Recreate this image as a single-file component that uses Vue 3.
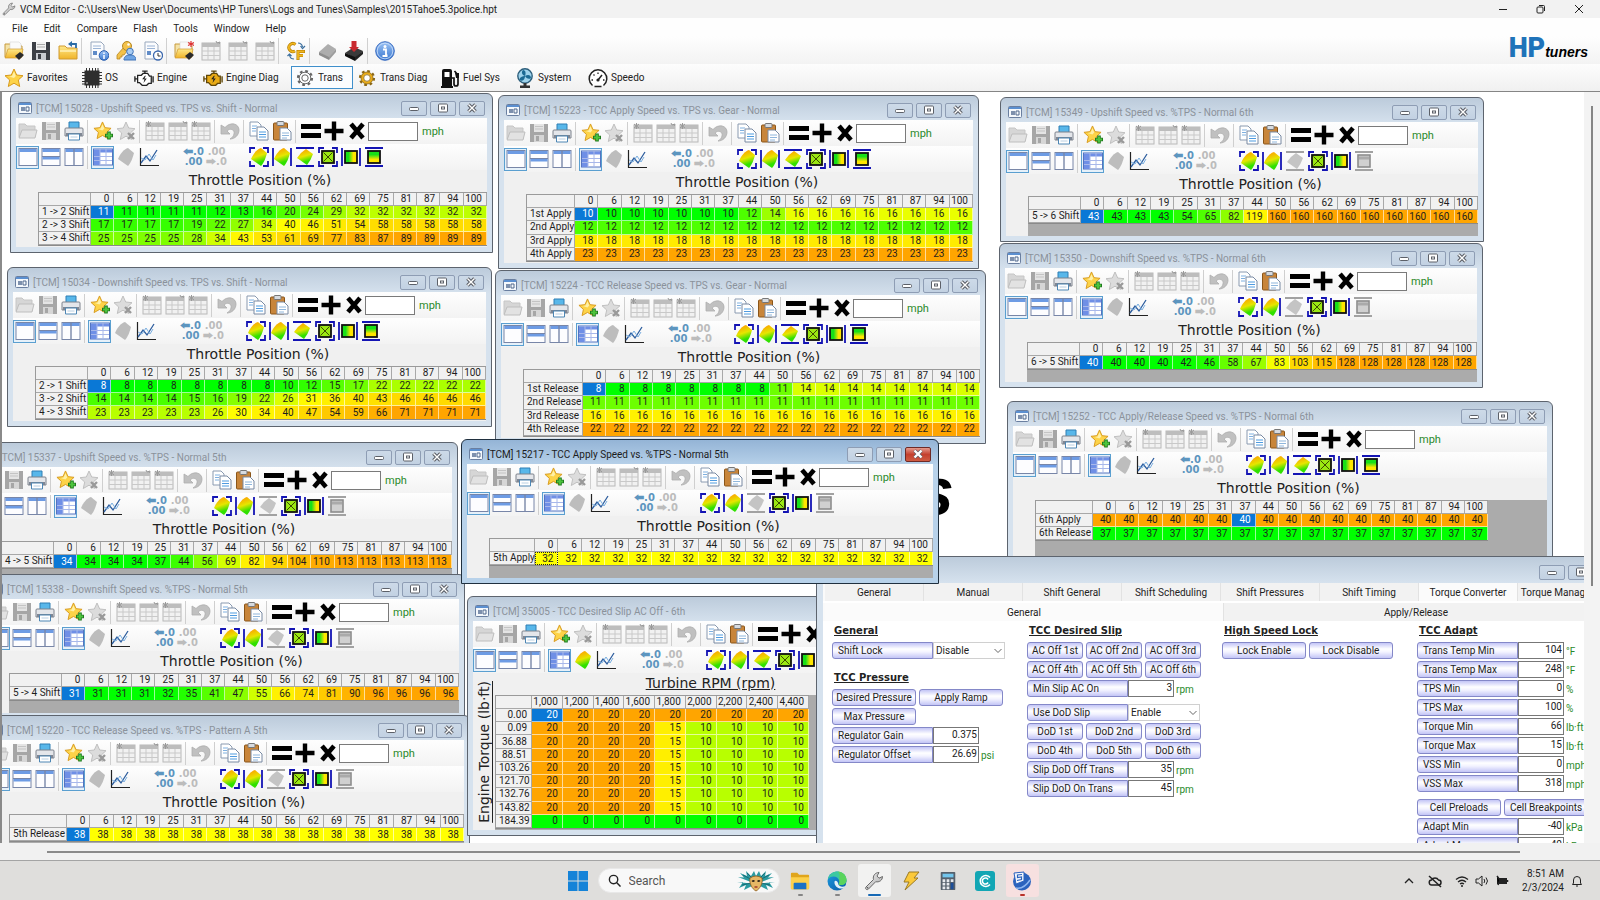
<script setup>
// Menu and toolbars of the main frame
const menus = ['File', 'Edit', 'Compare', 'Flash', 'Tools', 'Window', 'Help']

const mainTools = [
  ['open-chip', 'save', 'folder-back'],
  ['doc-info', 'key-user', 'doc-clock'],
  ['open-compare', 'sheet', 'sheet', 'sheet'],
  ['units'],
  ['chip-read', 'chip-write'],
  ['info'],
]

const sections = [
  { label: 'Favorites', icon: 'star' },
  { label: 'OS', icon: 'cpu' },
  { label: 'Engine', icon: 'engine' },
  { label: 'Engine Diag', icon: 'engine-diag' },
  { label: 'Trans', icon: 'gear', active: true },
  { label: 'Trans Diag', icon: 'gear-diag' },
  { label: 'Fuel Sys', icon: 'pump' },
  { label: 'System', icon: 'fan' },
  { label: 'Speedo', icon: 'gauge' },
]

// Toolbars of a table window
const fileTools = [
  ['folder-off', 'save-off', 'printer'],
  ['star-add', 'star-del'],
  ['sheet-off', 'sheet', 'sheet-off'],
  ['undo'],
  ['copy', 'paste'],
]
const mathTools = ['equals', 'plus', 'times']

const full = ['fit-all', 'fit-x', 'fit-y', 'range-all', 'range-x', 'range-y']
const rowOnly = ['fit-all', 'fit-x', 'fit-y-off', 'range-all', 'range-x', 'range-y-off']

const tps = [0, 6, 12, 19, 25, 31, 37, 44, 50, 56, 62, 69, 75, 81, 87, 94, 100]
const rep = (v, n = 17) => Array(n).fill(v)

const slipRow = [20, 20, 20, 20, 15, 10, 10, 10, 10]

// left/top/width/height of each child window inside the MDI area
const windows = [
  {
    title: '[TCM] 15028 - Upshift Speed vs. TPS vs. Shift - Normal',
    x: 8, y: 1, w: 483, h: 160, head: 52, th: 54, tools: full,
    rows: [
      ['1 -> 2 Shift', [11, 11, 11, 11, 11, 12, 13, 16, 20, 24, 29, 32, 32, 32, 32, 32, 32]],
      ['2 -> 3 Shift', [17, 17, 17, 17, 19, 22, 27, 34, 40, 46, 51, 54, 58, 58, 58, 58, 58]],
      ['3 -> 4 Shift', [25, 25, 25, 25, 28, 34, 43, 53, 61, 69, 77, 83, 87, 89, 89, 89, 89]],
    ],
  },
  {
    title: '[TCM] 15223 - TCC Apply Speed vs. TPS vs. Gear - Normal',
    x: 496, y: 3, w: 481, h: 174, head: 48, th: 68, tools: full,
    rows: [
      ['1st Apply', [...rep(10, 7), 12, 14, ...rep(16, 8)]],
      ['2nd Apply', rep(12)],
      ['3rd Apply', rep(18)],
      ['4th Apply', rep(23)],
    ],
  },
  {
    title: '[TCM] 15349 - Upshift Speed vs. %TPS - Normal 6th',
    x: 998, y: 5, w: 484, h: 145, head: 52, th: 27, tools: rowOnly, fill: true,
    rows: [['5 -> 6 Shift', [...rep(43, 4), 54, 65, 82, 119, ...rep(160, 9)]]],
  },
  {
    title: '[TCM] 15350 - Downshift Speed vs. %TPS - Normal 6th',
    x: 997, y: 151, w: 484, h: 145, head: 52, th: 27, tools: rowOnly, fill: true,
    rows: [['6 -> 5 Shift', [...rep(40, 4), 42, 46, 58, 67, 83, 103, 115, ...rep(128, 6)]]],
  },
  {
    title: '[TCM] 15034 - Downshift Speed vs. TPS vs. Shift - Normal',
    x: 5, y: 175, w: 485, h: 160, head: 52, th: 54, tools: full,
    rows: [
      ['2 -> 1 Shift', [...rep(8, 8), 10, 12, 15, 17, ...rep(22, 5)]],
      ['3 -> 2 Shift', [14, 14, 14, 14, 15, 16, 19, 22, 26, 31, 36, 40, 43, 46, 46, 46, 46]],
      ['4 -> 3 Shift', [23, 23, 23, 23, 23, 26, 30, 34, 40, 47, 54, 59, 66, 71, 71, 71, 71]],
    ],
  },
  {
    title: '[TCM] 15224 - TCC Release Speed vs. TPS vs. Gear - Normal',
    x: 493, y: 178, w: 491, h: 174, head: 59, th: 68, tools: full,
    rows: [
      ['1st Release', [...rep(8, 8), 11, ...rep(14, 8)]],
      ['2nd Release', rep(11)],
      ['3rd Release', rep(16)],
      ['4th Release', rep(22)],
    ],
  },
  {
    title: '[TCM] 15252 - TCC Apply/Release Speed vs. %TPS - Normal 6th',
    x: 1005, y: 309, w: 546, h: 190, head: 57, th: 40, tw: 453, tools: full, fill: true, sel: [0, 6],
    rows: [['6th Apply', rep(40)], ['6th Release', rep(37)]],
  },
  {
    title: '[TCM] 15337 - Upshift Speed vs. %TPS - Normal 5th',
    x: -29, y: 350, w: 485, h: 145, head: 52, th: 27, tools: rowOnly, fill: true,
    rows: [['4 -> 5 Shift', [...rep(34, 4), 37, 44, 56, 69, 82, 94, 104, 110, ...rep(113, 5)]]],
  },
  {
    title: '[TCM] 15338 - Downshift Speed vs. %TPS - Normal 5th',
    x: -21, y: 482, w: 484, h: 145, head: 52, th: 27, tools: rowOnly, fill: true,
    rows: [['5 -> 4 Shift', [...rep(31, 4), 32, 35, 41, 47, 55, 66, 74, 81, 90, ...rep(96, 4)]]],
  },
  {
    title: '[TCM] 15220 - TCC Release Speed vs. %TPS - Pattern A 5th',
    x: -21, y: 623, w: 489, h: 145, head: 57, th: 27, tools: rowOnly, fill: true,
    rows: [['5th Release', rep(38)]],
  },
  {
    title: '[TCM] 35005 - TCC Desired Slip AC Off - 6th',
    x: 465, y: 504, w: 470, h: 240, head: 36, th: 134, tw: 314, tools: full, fill: true,
    axis: 'Turbine RPM (rpm)', yAxis: 'Engine Torque (lb·ft)', surface: true,
    cols: ['1,000', '1,200', '1,400', '1,600', '1,800', '2,000', '2,200', '2,400', '4,400'],
    rows: [
      ['0.00', rep(20, 9)],
      ...['0.09', '36.88', '88.51', '103.26', '121.70', '132.76', '143.82'].map(n => [n, slipRow]),
      ['184.39', rep(0, 9)],
    ],
  },
]

const activeWindow = {
  title: '[TCM] 15217 - TCC Apply Speed vs. %TPS - Normal 5th',
  x: 459, y: 347, w: 478, h: 145, head: 45, th: 27, tools: rowOnly, fill: true, active: true,
  rows: [['5th Apply', rep(32)]],
}
const tableWindows = [...windows, activeWindow]

// green at the minimum, yellow at the average, orange at the maximum
function cellColor(win, v) {
  const all = win.rows.flatMap(r => r[1])
  const min = Math.min(...all)
  const max = Math.max(...all)
  const avg = all.reduce((a, b) => a + b, 0) / all.length
  if (min === max) return 'rgb(255, 255, 0)'
  if (v <= avg) return `rgb(${Math.round(255 * (v - min) / (avg - min))}, 255, 0)`
  return `rgb(255, ${Math.round(255 - 90 * (v - avg) / (max - avg))}, 0)`
}

function isSelected(win, r, c) {
  const [sr, sc] = win.sel || [0, 0]
  return r === sr && c === sc
}

const tabs = ['General', 'Manual', 'Shift General', 'Shift Scheduling', 'Shift Pressures', 'Shift Timing', 'Torque Converter', 'Torque Management']

const num = (label, value, unit) => ({ type: 'num', label, value, unit })
const formColumns = [
  [
    { type: 'heading', text: 'General' },
    { type: 'select', label: 'Shift Lock', value: 'Disable' },
    { type: 'space-l' },
    { type: 'heading', text: 'TCC Pressure' },
    { type: 'half', items: ['Desired Pressure', 'Apply Ramp'] },
    { type: 'half', items: ['Max Pressure'] },
    num('Regulator Gain', '0.375', ''),
    num('Regulator Offset', '26.69', 'psi'),
  ],
  [
    { type: 'heading', text: 'TCC Desired Slip' },
    { type: 'third', items: ['AC Off 1st', 'AC Off 2nd', 'AC Off 3rd'] },
    { type: 'third', items: ['AC Off 4th', 'AC Off 5th', 'AC Off 6th'] },
    num('Min Slip AC On', '3', 'rpm'),
    { type: 'space' },
    { type: 'select', label: 'Use DoD Slip', value: 'Enable' },
    { type: 'third', items: ['DoD 1st', 'DoD 2nd', 'DoD 3rd'] },
    { type: 'third', items: ['DoD 4th', 'DoD 5th', 'DoD 6th'] },
    num('Slip DoD Off Trans', '35', 'rpm'),
    num('Slip DoD On Trans', '45', 'rpm'),
  ],
  [
    { type: 'heading', text: 'High Speed Lock' },
    { type: 'half', items: ['Lock Enable', 'Lock Disable'] },
  ],
  [
    { type: 'heading', text: 'TCC Adapt' },
    num('Trans Temp Min', '104', '°F'),
    num('Trans Temp Max', '248', '°F'),
    num('TPS Min', '0', '%'),
    num('TPS Max', '100', '%'),
    num('Torque Min', '66', 'lb·ft'),
    num('Torque Max', '15', 'lb·ft'),
    num('VSS Min', '0', 'mph'),
    num('VSS Max', '318', 'mph'),
    { type: 'space' },
    { type: 'half', items: ['Cell Preloads', 'Cell Breakpoints'] },
    num('Adapt Min', '-40', 'kPa'),
    num('Adapt Max', '40', 'kPa'),
  ],
]

const pinned = [
  { icon: 'explorer', mark: 'dot' },
  { icon: 'edge', mark: 'dot' },
  { icon: 'wrench', mark: 'bar', state: 'current' },
  { icon: 'bolt' },
  { icon: 'calc' },
  { icon: 'camtasia' },
  { icon: 'snagit', mark: 'red', state: 'alert' },
]
</script>

<template>
  <svg class="sprite" aria-hidden="true">
    <defs>
      <linearGradient id="g-surf" x1="0.3" y1="0" x2="0.6" y2="1">
        <stop offset="0" stop-color="#ff9a00"/><stop offset="0.45" stop-color="#e6e600"/><stop offset="0.8" stop-color="#30e000"/>
      </linearGradient>
      <linearGradient id="g-gold" x1="0" y1="0" x2="0" y2="1">
        <stop offset="0" stop-color="#ffe98a"/><stop offset="1" stop-color="#f0b429"/>
      </linearGradient>
      <linearGradient id="g-h" x1="0" x2="1"><stop offset="0.3" stop-color="#18e018"/><stop offset="0.7" stop-color="#ffe600"/></linearGradient>
      <linearGradient id="g-v" x1="0" y1="0" x2="0" y2="1"><stop offset="0.3" stop-color="#18e018"/><stop offset="0.7" stop-color="#ffe600"/></linearGradient>
      <linearGradient id="g-blue" x1="0" y1="0" x2="0" y2="1"><stop offset="0" stop-color="#9cc3f5"/><stop offset="1" stop-color="#3a78d0"/></linearGradient>
      <linearGradient id="g-edge" x1="0" y1="0" x2="1" y2="1"><stop offset="0" stop-color="#1b9de2"/><stop offset="1" stop-color="#0c59a4"/></linearGradient>
      <linearGradient id="g-steel" x1="0" y1="0" x2="1" y2="1"><stop offset="0" stop-color="#f4f4f4"/><stop offset="1" stop-color="#a8a8a8"/></linearGradient>
    </defs>

    <symbol id="win" viewBox="0 0 14 12">
      <rect x="0.5" y="0.5" width="13" height="11" rx="1" fill="#f4f8fc" stroke="#6a7fa0"/>
      <rect x="1" y="1" width="12" height="2" fill="#5b8fd0"/>
      <path d="M3 5h4v4H3z" fill="#7d90ad"/><path d="M8 5h3v4H8z" fill="none" stroke="#50688c"/>
    </symbol>
    <symbol id="wrench" viewBox="0 0 20 20">
      <path d="M2 16 L9.500 8.500 C8.500 5 11 1.500 15 1.500 L13 5 L15 7.200 L18.500 5.500 C18.500 9.500 15 11.500 11.700 10.700 L4.500 18 C3 19.500 0.500 18 2 16Z" fill="url(#g-steel)" stroke="#6a6a6a" stroke-width="1"/>
      <circle cx="3.500" cy="16.700" r="0.800" fill="#555"/>
    </symbol>

    <symbol id="open-chip" viewBox="0 0 20 20">
      <path d="M1 5V3h6l2 2h9v11H1z" fill="#f4e3a8" stroke="#c79a3c"/><path d="M6 1h9l2 2v6H6z" fill="#fafafa" stroke="#ccc" stroke-width="0.500"/>
      <path d="M1 17l3-9h15l-2 9z" fill="url(#g-gold)" stroke="#d09a30" stroke-width="0.700"/>
      <path d="M11 15l5-4 4 3-5 5z" fill="#2b2b2b"/>
    </symbol>
    <symbol id="open-compare" viewBox="0 0 20 20">
      <use href="#open-chip"/>
      <path d="M17 0v6M14 1.500l6 3M20 1.500l-6 3" stroke="#d33" stroke-width="1.200"/>
    </symbol>
    <symbol id="folder-back" viewBox="0 0 20 20">
      <path d="M1 5h6l2 2h10v11H1z" fill="url(#g-gold)" stroke="#d09a30"/>
      <path d="M2 10h16" stroke="#fff2b8" stroke-width="1.500"/>
      <path d="M18 7V3h-6" fill="none" stroke="#2b6ca8" stroke-width="1.800"/><path d="M14 0l-4 3 4 3z" fill="#2b6ca8"/>
    </symbol>
    <symbol id="folder-off" viewBox="0 0 20 20">
      <path d="M1 5V3h6l2 2h8v11H1z" fill="#d6d6d6" stroke="#c6c6c6"/><path d="M1 17l3-8h15l-2 8z" fill="#e2e2e2" stroke="#bebebe"/>
    </symbol>
    <symbol id="save" viewBox="0 0 20 20">
      <path d="M1 1h18v18H1z" fill="#3c3f46"/><path d="M5 1h10v8H5z" fill="#f2f2f2"/><path d="M6 3.500h8M6 6h8" stroke="#aaa"/><path d="M5 12h10v7H5z" fill="#c9ccd2"/><path d="M7 13h3v5H7z" fill="#3c3f46"/>
    </symbol>
    <symbol id="save-off" viewBox="0 0 20 20">
      <path d="M1 1h18v18H1z" fill="#a6a6a6"/><path d="M5 1h10v8H5z" fill="#e4e4e4"/><path d="M6 3.500h8M6 6h8" stroke="#c4c4c4"/><path d="M5 12h10v7H5z" fill="#d6d6d6"/><path d="M7 13h3v5H7z" fill="#a6a6a6"/>
    </symbol>
    <symbol id="doc-info" viewBox="0 0 20 20">
      <path d="M2 1h10l3 3v14H2z" fill="#fbfcfe" stroke="#99a8bd"/><path d="M4 5h8M4 7.500h8" stroke="#9bb4d6"/><path d="M4 10h4v4H4z" fill="#5f8bc8"/>
      <circle cx="15" cy="14.500" r="4.800" fill="url(#g-blue)" stroke="#2c5fae"/><path d="M15 11.500v1.500M15 14v4" stroke="#fff" stroke-width="1.500"/>
    </symbol>
    <symbol id="doc-clock" viewBox="0 0 20 20">
      <path d="M2 1h10l3 3v14H2z" fill="#fbfcfe" stroke="#99a8bd"/><path d="M4 5h8M4 7.500h8" stroke="#9bb4d6"/><path d="M4 10h4v4H4z" fill="#5f8bc8"/>
      <circle cx="15" cy="14.500" r="4.500" fill="#fff" stroke="#3b68ae" stroke-width="1.300"/><path d="M15 12v3h2.500" fill="none" stroke="#333"/>
    </symbol>
    <symbol id="key-user" viewBox="0 0 20 20">
      <path d="M8 6l-7 8v4h3v-2h2v-2h2l3-4z" fill="#f3c24a" stroke="#b58622" stroke-width="0.800"/><circle cx="11" cy="5" r="4.500" fill="#f3c24a" stroke="#b58622"/><circle cx="12.500" cy="3.500" r="1.300" fill="#fff"/>
      <circle cx="14" cy="10.500" r="3.300" fill="#a9cdf3" stroke="#3f73b8"/><path d="M8 19c0-4 3-5 6-5s6 1 6 5z" fill="#6fa5e4" stroke="#3f73b8"/>
    </symbol>
    <symbol id="sheet" viewBox="0 0 20 20">
      <rect x="1" y="2" width="18" height="17" fill="#f1f1f1" stroke="#b8b8b8"/><rect x="1" y="2" width="18" height="4" fill="#bdbdbd"/>
      <path d="M1 10h18M1 14.500h18M7 6v13M13 6v13" stroke="#c9c9c9"/>
      <path d="M15 0l1 2 3-1-1 2" fill="none" stroke="#999"/>
    </symbol>
    <symbol id="sheet-off" viewBox="0 0 20 20">
      <rect x="1" y="2" width="18" height="17" fill="#f1f1f1" stroke="#b8b8b8"/><rect x="1" y="2" width="18" height="4" fill="#bdbdbd"/>
      <path d="M1 10h18M1 14.500h18M7 6v13M13 6v13" stroke="#c9c9c9"/>
      <path d="M3.500 0v6M1 1l5 4M6 1L1 5" stroke="#999"/>
    </symbol>
    <symbol id="units" viewBox="0 0 20 20">
      <path d="M9.500 3.500A4 4 0 1 0 9 10" fill="none" stroke="#b07800" stroke-width="3"/><path d="M9.500 3.500A4 4 0 1 0 9 10" fill="none" stroke="#f0b61e" stroke-width="1.800"/>
      <path d="M12 19v-8.500h7M12 14.500h5" fill="none" stroke="#b07800" stroke-width="3"/><path d="M12 18.500v-8h6.500M12 14.500h5" fill="none" stroke="#f0b61e" stroke-width="1.800"/>
      <path d="M12 2c3 0 4 1 4.500 4M14.500 5l2 2.500L19 5M8 18c-3 0-4-1-4.500-4M1.500 15l2-2 2 2" fill="none" stroke="#3c6f9e" stroke-width="1.200"/>
    </symbol>
    <symbol id="chip-read" viewBox="0 0 20 20">
      <path d="M2 11l9-8 8 5-7 9z" fill="#adadad"/><path d="M2 11l10 5v3L2 14z" fill="#8d8d8d"/><path d="M12 16l7-8v3l-7 8z" fill="#9c9c9c"/>
    </symbol>
    <symbol id="chip-write" viewBox="0 0 20 20">
      <path d="M1 12l9-6 9 4-8 7z" fill="#3a3a3a"/><path d="M1 12l10 4v4L1 15z" fill="#111"/><path d="M11 16l8-6v3l-8 7z" fill="#222"/>
      <path d="M7.500 0h5v6H15l-5 5-5-5h2.500z" fill="#c92a2f"/>
    </symbol>
    <symbol id="info" viewBox="0 0 20 20">
      <circle cx="10" cy="10" r="9.300" fill="url(#g-blue)" stroke="#3a6cc0"/><circle cx="10" cy="10" r="7.800" fill="none" stroke="#cfe2fb" stroke-width="0.800"/>
      <circle cx="10" cy="5.500" r="1.500" fill="#fff"/><path d="M8 8.500h3v6h1.500M7.500 15h5" fill="none" stroke="#fff" stroke-width="1.800"/>
    </symbol>

    <symbol id="star" viewBox="0 0 20 20">
      <path d="M10 1l2.700 6 6.300.7-4.700 4.300 1.400 6.500L10 15.200l-5.700 3.300L5.700 12 1 7.700 7.300 7z" fill="#fdd348" stroke="#d79a1e"/>
      <path d="M10 3.500l1.800 4.400-1.800 2-5-1.400 3-.5z" fill="#fff0a8"/>
    </symbol>
    <symbol id="star-add" viewBox="0 0 20 20">
      <use href="#star" width="19" height="19"/><path d="M12 14.500h8M16 10.500v8" stroke="#1f7a1f" stroke-width="3.600"/><path d="M13 14.500h6M16 11.500v6" stroke="#4cc33c" stroke-width="2"/>
    </symbol>
    <symbol id="star-del" viewBox="0 0 20 20">
      <path d="M10 1l2.700 6 6.300.7-4.700 4.300 1.400 6.500L10 15.200l-5.700 3.300L5.700 12 1 7.700 7.300 7z" fill="#dcdcdc" stroke="#c0c0c0"/><path d="M12 12l6 6M18 12l-6 6" stroke="#999" stroke-width="2.400"/>
    </symbol>
    <symbol id="cpu" viewBox="0 0 20 20">
      <path d="M4.500 0v20M7.500 0v20M10.500 0v20M13.500 0v20M16 0v20M0 4.500h20M0 7.500h20M0 10.500h20M0 13.500h20M0 16h20" stroke="#333"/>
      <rect x="2.500" y="2.500" width="15" height="15" fill="#2e2e2e"/><circle cx="5" cy="15" r="1" fill="#999"/>
    </symbol>
    <symbol id="engine" viewBox="0 0 22 20">
      <path d="M5 7h3l2-2h5l2 3h2v8h-3l-2 2H9l-3-3H4V7z" fill="#fff" stroke="#222" stroke-width="1.400"/>
      <path d="M9 2.500h6M12 2.500V5M1 8v6M1 11h3M21 8v7" stroke="#222" stroke-width="1.500"/><path d="M12 7.500l-3 4h2.500l-1 4 3.500-5h-2.500l1.500-3z" fill="#222"/>
    </symbol>
    <symbol id="engine-diag" viewBox="0 0 22 20">
      <path d="M5 7h3l2-2h5l2 3h2v8h-3l-2 2H9l-3-3H4V7z" fill="#e9ab16" stroke="#5f4608" stroke-width="1.400"/>
      <path d="M9 2.500h6M12 2.500V5M1 8v6M1 11h3M21 8v7" stroke="#5f4608" stroke-width="1.500"/><path d="M12 7.500l-3 4h2.500l-1 4 3.500-5h-2.500l1.500-3z" fill="#222"/>
    </symbol>
    <symbol id="gear" viewBox="0 0 20 20">
      <circle cx="10" cy="10" r="7" fill="none" stroke="#666" stroke-width="2.200" stroke-dasharray="2.750 2.750"/>
      <circle cx="10" cy="10" r="5.800" fill="#fff" stroke="#666"/><circle cx="10" cy="10" r="3.200" fill="#fff" stroke="#666"/>
    </symbol>
    <symbol id="gear-diag" viewBox="0 0 20 20">
      <circle cx="10" cy="10" r="7" fill="none" stroke="#8a6614" stroke-width="2.200" stroke-dasharray="2.750 2.750"/>
      <circle cx="10" cy="10" r="4.700" fill="#fff" stroke="#e9ab16" stroke-width="2.600"/><circle cx="10" cy="10" r="6" fill="none" stroke="#8a6614" stroke-width="0.800"/><circle cx="10" cy="10" r="3.300" fill="none" stroke="#8a6614" stroke-width="0.800"/>
    </symbol>
    <symbol id="pump" viewBox="0 0 20 20">
      <path d="M2 18V3q0-2 2-2h6q2 0 2 2v15h1v2H1v-2z" fill="#111"/><path d="M4.500 4h5v5h-5z" fill="#fff"/>
      <path d="M12 10h2v6q0 2 2 2t2-2V7l-3.500-4" fill="none" stroke="#111" stroke-width="1.700"/><path d="M15 5h4v5h-3z" fill="#111"/>
    </symbol>
    <symbol id="fan" viewBox="0 0 20 20">
      <circle cx="10" cy="8" r="7.200" fill="#9fd3ec" stroke="#2d5f7c" stroke-width="1.400"/>
      <path d="M10 8c-3-1-4-4-2-6 3 0 3 4 2 6zM10 8c3-2 6-1 6 2-2 2-5 0-6-2zM10 8c0 3-2 6-5 4-1-3 3-4 5-4z" fill="#1c6a94"/>
      <path d="M8.500 15h3v2.500h3.500V20H5v-2.500h3.500z" fill="#333"/>
    </symbol>
    <symbol id="gauge" viewBox="0 0 20 20">
      <path d="M4.500 17.500A8.800 8.800 0 1 1 15.500 17.500" fill="#fff" stroke="#222" stroke-width="1.500"/>
      <path d="M10 12l4-5" stroke="#222" stroke-width="1.500"/><circle cx="10" cy="12" r="1.600" fill="#222"/><path d="M3.500 12H5M5.500 6.500l1 1M10 4.500V6M16.500 12H15M6.500 18.500h7" stroke="#222" stroke-width="1.300"/>
    </symbol>

    <symbol id="printer" viewBox="0 0 20 20">
      <path d="M5 1h10v7H5z" fill="#58b7ea" stroke="#2f7fb4"/><path d="M2 7h16q1 0 1 1v7H1V8q0-1 1-1z" fill="#e4e6ea" stroke="#7d828c"/>
      <path d="M2 12h16v3H2z" fill="#7f8794"/><path d="M4.500 13h11v6h-11z" fill="#fff" stroke="#4d86b4"/><path d="M6.500 16h7" stroke="#b8cfe2"/>
    </symbol>
    <symbol id="undo" viewBox="0 0 20 20">
      <path d="M1 4l0 9h9l-3-3c3-3 8-2 7 3-.5 2-2 4-4 5 5 0 9-4 9-9 0-6-8-9-14-2.500z" fill="#c0c0c0" stroke="#adadad" stroke-width="0.800"/>
    </symbol>
    <symbol id="copy" viewBox="0 0 20 20">
      <path d="M1 1h8l3 3v11H1z" fill="#fff" stroke="#8a9ab0"/><path d="M3 5h5M3 7.500h4M3 10h4" stroke="#7fb0e0"/>
      <path d="M8 6h7l4 4v9H8z" fill="#fff" stroke="#7889a2"/><path d="M10 11h7M10 13.500h7M10 16h7" stroke="#4f9be0" stroke-width="1.200"/>
    </symbol>
    <symbol id="paste" viewBox="0 0 20 20">
      <rect x="1.500" y="2" width="14" height="17" rx="1" fill="#c8853a" stroke="#8a5518"/><rect x="5" y="0.500" width="7" height="4" rx="1" fill="#d7dbe0" stroke="#777"/>
      <path d="M8 7h7l4 4v8H8z" fill="#fff" stroke="#7889a2"/><path d="M10 12h7M10 14.500h7M10 17h5" stroke="#8fb6dc"/>
    </symbol>
    <symbol id="equals" viewBox="0 0 20 20"><path d="M0 5.500h20M0 14.500h20" stroke="#000" stroke-width="5"/></symbol>
    <symbol id="plus" viewBox="0 0 20 20"><path d="M0.500 10h19M10 0.500v19" stroke="#000" stroke-width="4.400"/></symbol>
    <symbol id="times" viewBox="0 0 20 20"><path d="M4 3l12 14M16 3L4 17" stroke="#000" stroke-width="4.600"/></symbol>

    <symbol id="pane-one" viewBox="0 0 20 20"><rect x="1" y="1.500" width="18" height="17" fill="#fdfdff" stroke="#7886a8"/><path d="M1.500 2h17v3h-17z" fill="#6d9be4"/></symbol>
    <symbol id="pane-rows" viewBox="0 0 20 20"><rect x="1" y="1.500" width="18" height="17" fill="#fdfdff" stroke="#7886a8"/><path d="M1.500 2h17v3h-17zM1.500 10h17v2.500h-17z" fill="#6d9be4"/><path d="M1 9.500h18" stroke="#7886a8"/></symbol>
    <symbol id="pane-cols" viewBox="0 0 20 20"><rect x="1" y="1.500" width="18" height="17" fill="#fdfdff" stroke="#7886a8"/><path d="M1.500 2h17v3h-17z" fill="#6d9be4"/><path d="M10 2v16" stroke="#7886a8" stroke-width="1.400"/></symbol>
    <symbol id="grid" viewBox="0 0 20 20">
      <rect x="0.500" y="2" width="19" height="16" fill="#fff" stroke="#5474c0"/><path d="M1 2.500h18v3H1zM1 5h6v13H1z" fill="#6f8fe6"/>
      <path d="M1 9.500h18M1 13.500h18M7 2v16M13 2v16" stroke="#a8b8ea"/>
    </symbol>
    <symbol id="surface-off" viewBox="0 0 20 20"><path d="M2 12C4 7 8 2 12 1l6 5c-1 4-3 10-6 13z" fill="#bdbdbd"/></symbol>
    <symbol id="surface" viewBox="0 0 20 20"><path d="M2 12C4 7 8 2 12 1l6 5c-1 4-3 10-6 13z" fill="url(#g-surf)"/></symbol>
    <symbol id="chart" viewBox="0 0 20 20">
      <path d="M1.500 1v17.500H20" fill="none" stroke="#222" stroke-width="1.200"/><path d="M2 16l5-7 4 5 7-11" fill="none" stroke="#2d5d9e" stroke-width="1.300"/><path d="M2 11l4 2 4-6 4 6 3-5" fill="none" stroke="#79aee0"/>
    </symbol>

    <symbol id="fit-all" viewBox="0 0 20 20">
      <path d="M1 6V1h5M14 1h5v5M19 14v5h-5M6 19H1v-5" fill="none" stroke="#1414b4" stroke-width="1.800"/><use href="#surface"/>
    </symbol>
    <symbol id="fit-x" viewBox="0 0 20 20"><path d="M1 1v18M19 1v18" stroke="#1414b4" stroke-width="1.800"/><use href="#surface"/></symbol>
    <symbol id="fit-y" viewBox="0 0 20 20"><path d="M1 1h18M1 19h18" stroke="#1414b4" stroke-width="1.800"/><path d="M2 11q4-6 9-9l7 5q-2 6-6 11z" fill="url(#g-surf)"/></symbol>
    <symbol id="fit-y-off" viewBox="0 0 20 20"><path d="M1 1h18M1 19h18" stroke="#a2a2a2" stroke-width="1.800"/><path d="M2 11q4-6 9-9l7 5q-2 6-6 11z" fill="#c4c4c4"/></symbol>
    <symbol id="range-all" viewBox="0 0 20 20">
      <path d="M1 6V1h5M14 1h5v5M19 14v5h-5M6 19H1v-5" fill="none" stroke="#1414b4" stroke-width="1.800"/>
      <rect x="4" y="4" width="12" height="12" fill="#9be812" stroke="#111" stroke-width="1.800"/><path d="M5.500 5.500l9 9M14.500 5.500l-9 9" stroke="#3d4a00"/>
    </symbol>
    <symbol id="range-x" viewBox="0 0 20 20">
      <path d="M1 1v18M19 1v18" stroke="#1414b4" stroke-width="1.800"/><rect x="4" y="4" width="12" height="12" fill="url(#g-h)" stroke="#111" stroke-width="1.800"/>
    </symbol>
    <symbol id="range-y" viewBox="0 0 20 20">
      <path d="M1 1h18M1 19h18" stroke="#1414b4" stroke-width="2"/><rect x="4" y="4" width="12" height="12" fill="url(#g-v)" stroke="#111" stroke-width="1.800"/>
    </symbol>
    <symbol id="range-y-off" viewBox="0 0 20 20">
      <path d="M1 1h18M1 19h18" stroke="#a2a2a2" stroke-width="1.800"/><rect x="4" y="4" width="12" height="12" fill="#d0d0d0" stroke="#8c8c8c" stroke-width="1.600"/><path d="M5 7h10" stroke="#aaa" stroke-width="3"/>
    </symbol>

    <symbol id="explorer" viewBox="0 0 22 20"><path d="M1 2q0-1 1-1h6l2 2h10q1 0 1 1v14q0 1-1 1H2q-1 0-1-1z" fill="#e0a51c"/><path d="M1 6h20v12q0 1-1 1H2q-1 0-1-1z" fill="#fcd04b"/><path d="M4 13q0-1 1-1h12q1 0 1 1v6H4z" fill="#1a72c4"/></symbol>
    <symbol id="edge" viewBox="0 0 20 20">
      <circle cx="10" cy="10" r="9.500" fill="url(#g-edge)"/>
      <path d="M0.700 8.500C2 3 6 .5 10.500.5c5 0 9 4 9 8.500 0 3-2.500 5-5.500 5-1.500 0-2.500-.5-2.300-1.300 1-1 .8-2 .6-3C11.500 7 9 5.500 6.500 5.500 4 5.500 2 6.500.7 8.500z" fill="#3cc9a0"/>
      <path d="M10.500.5c5 0 9 4 9 8.500 0 3-2.500 5-5.500 5-1.500 0-2.500-.5-2.300-1.300 1-1 .8-2 .6-3C12 7 14 3 10.500.5z" fill="#5ad45c"/>
      <path d="M7.500 10.500c-.5 4 3 7.500 7.500 7 1.500-.3 2.500-1 3.300-2.200-3.300 1.200-7 .2-7.300-3-.2-1.800-2.500-3.500-3.500-1.800z" fill="#e3f1f8"/>
    </symbol>
    <symbol id="bolt" viewBox="0 0 20 20"><path d="M8 1h10l-5 6h4L4 19l4-8H3z" fill="#fbc93a" stroke="#9a7a24"/></symbol>
    <symbol id="calc" viewBox="0 0 18 22"><rect x="1" y="1" width="16" height="20" rx="1" fill="#55606c"/><path d="M3 3h12v4H3z" fill="#72c5ec"/><path d="M3 9h3v3H3zM7.500 9h3v3h-3zM12 9h3v3h-3zM3 13h3v3H3zM7.500 13h3v3h-3zM3 17h3v3H3zM7.500 17h3v3h-3z" fill="#e6e9ee"/><path d="M12 13h3v7h-3z" fill="#1d4f9a"/></symbol>
    <symbol id="camtasia" viewBox="0 0 20 20"><rect x="0" y="0" width="20" height="20" rx="3" fill="#12a6b4"/><path d="M15 6.500A5.500 5.500 0 1 0 15 13.500M13 8.500a3 3 0 1 0 0 3" fill="none" stroke="#fff" stroke-width="1.600"/></symbol>
    <symbol id="snagit" viewBox="0 0 20 20"><circle cx="10" cy="10.500" r="9" fill="#2b62bd"/><path d="M4 17c5 1 10-2 14-8" fill="none" stroke="#8eb6f0" stroke-width="1.500"/><path d="M2 2l10-1v9l-8 3z" fill="#f2f6fd" stroke="#2b62bd"/><path d="M10 3.500L5.500 4v2.500l4-.5v2.500L5 9.500" fill="none" stroke="#2b62bd" stroke-width="1.200"/></symbol>
    <symbol id="mask" viewBox="0 0 38 22">
      <path d="M19 14L1 7l6 .5L3 3l7 3L9 1l5 5 3-5 2 5 3-5 2 5 5-5-1 5 7-3-4 4.500 6-.5zM19 14L0 12l6 0L2 18l7-3-2 5 8-4h8l8 4-2-5 7 3-4-6 6 0z" fill="#2a9aa0"/>
      <path d="M19 12L6 5M19 12L32 5M19 12L5 15M19 12L33 15M19 12L10 3M19 12L28 3" stroke="#125e68" stroke-width="0.800"/>
      <path d="M13 8q6-4 12 0c1 5-2 11-6 13-4-2-7-8-6-13z" fill="#e6b765" stroke="#8a5a1c" stroke-width="0.800"/><path d="M14.500 11q2-2 3.500 0-2 2-3.500 0M20 11q2-2 3.500 0-2 2-3.500 0" fill="#2c2418"/><path d="M17.500 17h3" stroke="#a33a2a" stroke-width="1.500"/>
    </symbol>
  </svg>

  <div class="app">
    <header class="frame">
      <div class="titlebar">
        <svg class="i14"><use href="#wrench"/></svg>
        <span class="app-title">VCM Editor - C:\Users\New User\Documents\HP Tuners\Logs and Tunes\Samples\2015Tahoe5.3police.hpt</span>
        <div class="caption">
          <button aria-label="Minimize"><svg viewBox="0 0 10 10"><path d="M1 5.500h8" stroke="#222"/></svg></button>
          <button aria-label="Restore"><svg viewBox="0 0 10 10"><rect x="1" y="3" width="6" height="6" rx="1" fill="none" stroke="#222"/><path d="M3 1.500h4.500q1 0 1 1V7" fill="none" stroke="#222"/></svg></button>
          <button aria-label="Close"><svg viewBox="0 0 10 10"><path d="M1 1l8 8M9 1l-8 8" stroke="#222"/></svg></button>
        </div>
      </div>
      <div class="upper">
        <div class="bars">
          <nav class="menubar">
            <button v-for="m in menus" :key="m">{{ m }}</button>
          </nav>
          <div class="main-tools">
            <div v-for="(group, g) in mainTools" :key="g" class="group">
              <button v-for="(t, i) in group" :key="i" :aria-label="t"><svg class="i20"><use :href="'#' + t"/></svg></button>
            </div>
          </div>
        </div>
        <div class="logo"><b>HP</b><i>tuners</i></div>
      </div>
      <nav class="sections">
        <button v-for="s in sections" :key="s.label" :class="{ active: s.active }">
          <svg class="i20"><use :href="'#' + s.icon"/></svg>{{ s.label }}
        </button>
      </nav>
    </header>

    <div class="workspace">
      <main class="mdi">
        <div class="brand">s</div>

        <!-- Table windows -->
        <section
          v-for="w in tableWindows" :key="w.title"
          :class="['child', { front: w.active, active: w.active }]"
          :style="{ left: w.x + 'px', top: w.y + 'px', width: w.w + 'px', height: w.h + 'px' }"
        >
          <div class="child-title">
            <svg class="win-icon"><use href="#win"/></svg>
            <span>{{ w.title }}</span>
            <div class="child-buttons">
              <button aria-label="Minimize"><svg viewBox="0 0 12 10"><rect x="1.500" y="4.500" width="9" height="3" rx="1" fill="#fff" stroke="#5c6068"/></svg></button>
              <button aria-label="Maximize"><svg viewBox="0 0 12 10"><rect x="1.500" y="1" width="9" height="8" rx="1" fill="#fff" stroke="#5c6068"/><rect x="4.500" y="4" width="3" height="2" fill="none" stroke="#5c6068"/></svg></button>
              <button class="close" aria-label="Close"><svg viewBox="0 0 12 10"><path class="x-out" d="M2.500 1.500l7 7M9.500 1.500l-7 7"/><path class="x-in" d="M2.500 1.500l7 7M9.500 1.500l-7 7"/></svg></button>
            </div>
          </div>
          <div class="child-body">
            <div class="tools">
              <div v-for="(group, g) in fileTools" :key="g" class="group">
                <button v-for="(t, i) in group" :key="i" :aria-label="t"><svg class="i20"><use :href="'#' + t"/></svg></button>
              </div>
              <button v-for="t in mathTools" :key="t" :aria-label="t"><svg class="i20"><use :href="'#' + t"/></svg></button>
              <input type="text" class="amount" aria-label="Amount">
              <span class="unit">mph</span>
            </div>
            <div class="tools">
              <div class="group">
                <button class="on" aria-label="Single pane"><svg class="i20"><use href="#pane-one"/></svg></button>
                <button aria-label="Split rows"><svg class="i20"><use href="#pane-rows"/></svg></button>
                <button aria-label="Split columns"><svg class="i20"><use href="#pane-cols"/></svg></button>
              </div>
              <button class="on" aria-label="Table"><svg class="i20"><use href="#grid"/></svg></button>
              <button aria-label="Surface"><svg class="i20"><use :href="w.surface ? '#surface' : '#surface-off'"/></svg></button>
              <button aria-label="Chart"><svg class="i20"><use href="#chart"/></svg></button>
              <button class="decimals more" aria-label="More decimals"><span>🠰.0</span><span>.00</span></button>
              <button class="decimals less" aria-label="Fewer decimals"><span>.00</span><span>🠲.0</span></button>
              <div class="views">
                <button v-for="t in w.tools" :key="t" :aria-label="t"><svg class="i20"><use :href="'#' + t"/></svg></button>
              </div>
            </div>
            <div class="plot">
              <div class="y-axis"><span v-if="w.yAxis">{{ w.yAxis }}</span></div>
              <div class="plot-main">
                <div :class="['x-axis', { linked: w.axis }]">{{ w.axis || 'Throttle Position (%)' }}</div>
                <div :class="['grid-area', { fill: w.fill }]">
                  <table :style="{ height: w.th + 'px', width: w.tw ? w.tw + 'px' : '100%' }">
                    <colgroup><col :style="{ width: w.head + 'px' }"></colgroup>
                    <thead>
                      <tr>
                        <th></th>
                        <th v-for="c in w.cols || tps" :key="c" scope="col">{{ c }}</th>
                      </tr>
                    </thead>
                    <tbody>
                      <tr v-for="(row, r) in w.rows" :key="row[0]">
                        <th scope="row" :class="{ num: w.cols }">{{ row[0] }}</th>
                        <td
                          v-for="(v, c) in row[1]" :key="c"
                          :class="{ selected: isSelected(w, r, c) }"
                          :style="{ backgroundColor: isSelected(w, r, c) && !w.active ? '#0a78d6' : cellColor(w, v) }"
                        >{{ v }}</td>
                      </tr>
                    </tbody>
                  </table>
                </div>
              </div>
            </div>
          </div>
        </section>

        <!-- Torque converter window -->
        <section class="child torque">
          <div class="child-title">
            <div class="child-buttons">
              <button aria-label="Minimize"><svg viewBox="0 0 12 10"><rect x="1.500" y="4.500" width="9" height="3" rx="1" fill="#fff" stroke="#5c6068"/></svg></button>
              <button aria-label="Maximize"><svg viewBox="0 0 12 10"><rect x="1.500" y="1" width="9" height="8" rx="1" fill="#fff" stroke="#5c6068"/><rect x="4.500" y="4" width="3" height="2" fill="none" stroke="#5c6068"/></svg></button>
            </div>
          </div>
          <div class="child-body form-body">
            <div class="tabs">
              <button v-for="t in tabs" :key="t" :class="{ current: t === 'Torque Converter' }">{{ t }}</button>
            </div>
            <div class="tabs sub">
              <button class="current">General</button>
              <button>Apply/Release</button>
            </div>
            <div class="form">
              <div v-for="(col, ci) in formColumns" :key="ci" class="form-col">
                <template v-for="(f, fi) in col" :key="fi">
                  <h3 v-if="f.type === 'heading'">{{ f.text }}</h3>
                  <div v-else-if="f.type === 'num'" class="field">
                    <label class="pill" :for="`f${ci}-${fi}`">{{ f.label }}</label>
                    <input :id="`f${ci}-${fi}`" type="text" :value="f.value">
                    <span class="unit">{{ f.unit }}</span>
                  </div>
                  <div v-else-if="f.type === 'select'" class="field">
                    <label class="pill" :for="`f${ci}-${fi}`">{{ f.label }}</label>
                    <div class="select">
                      <select :id="`f${ci}-${fi}`"><option>{{ f.value }}</option></select>
                      <svg viewBox="0 0 10 6"><path d="M1.500 1l3.500 3.500L8.500 1" fill="none" stroke="#666"/></svg>
                    </div>
                  </div>
                  <div v-else-if="f.items" :class="['row', f.type]">
                    <button v-for="b in f.items" :key="b" class="pill">{{ b }}</button>
                  </div>
                  <div v-else :class="f.type"></div>
                </template>
              </div>
            </div>
          </div>
        </section>
      </main>
      <div class="vscroll"><div class="thumb"></div></div>
    </div>
    <div class="hscroll"><div class="thumb"></div></div>

    <footer class="taskbar">
      <div class="dock">
        <button class="start" aria-label="Start">
          <svg viewBox="0 0 20 20"><path d="M0 0h9.500v9.500H0zM10.500 0H20v9.500h-9.500zM0 10.500h9.500V20H0zM10.500 10.500H20V20h-9.500z" fill="#1583d8"/></svg>
        </button>
        <label class="search">
          <svg class="lens" viewBox="0 0 14 14"><circle cx="6" cy="6" r="4.500" fill="none" stroke="#222" stroke-width="1.500"/><path d="M9.500 9.500l4 4" stroke="#222" stroke-width="1.600"/></svg>
          <input type="text" placeholder="Search" aria-label="Search">
          <svg class="mask"><use href="#mask"/></svg>
        </label>
        <button v-for="p in pinned" :key="p.icon" :class="['pin', p.state]" :aria-label="p.icon">
          <svg class="i20"><use :href="'#' + p.icon"/></svg>
          <span :class="['mark', p.mark]"></span>
        </button>
      </div>
      <div class="tray">
        <svg class="i12" viewBox="0 0 12 12"><path d="M2 8l4-4 4 4" fill="none" stroke="#222" stroke-width="1.300"/></svg>
        <svg class="i14" viewBox="0 0 14 14"><path d="M4 11h6.500a2.500 2.500 0 0 0 0-5A4 4 0 0 0 3.500 6 2.500 2.500 0 0 0 4 11z" fill="none" stroke="#222" stroke-width="1.500"/><path d="M1 2l12 11" stroke="#222" stroke-width="1.500"/></svg>
        <div class="status">
          <svg class="i14" viewBox="0 0 14 14"><path d="M1 5.500q6-5 12 0M3 8q4-3.500 8 0M5 10q2-1.500 4 0" fill="none" stroke="#222" stroke-width="1.300"/><circle cx="7" cy="12" r="1" fill="#222"/></svg>
          <svg class="i14" viewBox="0 0 14 14"><path d="M1 5h2.500L7 2v10L3.500 9H1z" fill="none" stroke="#222"/><path d="M9 5q1.500 2 0 4M11 3.500q3 3.500 0 7" fill="none" stroke="#222"/></svg>
          <svg class="i14" viewBox="0 0 14 14"><path d="M2 4h10v6H2z" fill="#222"/><path d="M12.500 6v2M2 2l3 4-2 5" stroke="#222" stroke-width="1.500"/></svg>
        </div>
        <div class="clock"><span>8:51 AM</span><span>2/3/2024</span></div>
        <svg class="i12" viewBox="0 0 12 12"><path d="M1.500 9.500h9L9.500 8V5a3.500 3.500 0 0 0-7 0v3zM5 11h2" fill="none" stroke="#222"/></svg>
      </div>
    </footer>
  </div>
</template>

<style>
body {
  margin: 0;
  overflow: hidden;
}
</style>

<style scoped>
.sprite {
  position: absolute;
  width: 0;
  height: 0;
}

.app {
  display: flex;
  flex-direction: column;
  height: 100vh;
  font-family: Roboto, "Open Sans", sans-serif;
  font-size: 10px;
  color: #222;
  background: #fff;
}

button {
  display: flex;
  align-items: center;
  justify-content: center;
  margin: 0;
  padding: 0;
  border: 0;
  background: none;
  font: inherit;
  color: inherit;
  white-space: nowrap;
}
input, select {
  box-sizing: border-box;
  margin: 0;
  font: inherit;
  color: inherit;
}

.i20 { width: 20px; height: 20px; flex: none; }
.i14 { width: 14px; height: 14px; flex: none; }
.i12 { width: 12px; height: 12px; flex: none; }

/* Main frame */
.frame { border-bottom: 1px solid #858585; }

.titlebar {
  display: flex;
  align-items: center;
  gap: 4px;
  height: 18px;
  padding: 0 10px 0 2px;
  background: #f2f2f2;
}
.app-title { flex: 1; white-space: nowrap; }
.caption { display: flex; gap: 28px; padding-right: 6px; }
.caption svg { width: 10px; height: 10px; }

.upper {
  display: flex;
  justify-content: space-between;
  background: linear-gradient(#fefefe 40%, #f3f3f3);
}
.menubar {
  display: flex;
  align-items: center;
  gap: 16px;
  height: 20px;
  padding-left: 12px;
}
.main-tools {
  display: flex;
  height: 26px;
}
.main-tools button { width: 27px; }
.group { display: flex; }
.main-tools .group:not(:last-child) {
  border-right: 1px solid #d0d0d0;
  margin-right: 3px;
}

.logo {
  display: flex;
  align-items: baseline;
  align-self: flex-end;
  padding: 0 12px 0 0;
}
.logo b {
  font: 900 27px/24px Roboto, sans-serif;
  color: #1f73b9;
}
.logo i {
  font: italic 700 14px/24px "Liberation Sans", Arial, sans-serif;
  color: #000;
}

.sections {
  display: grid;
  grid-template-columns: 78px 52px 69px 89px 65px 83px 75px 73px 70px;
  align-items: center;
  height: 27px;
  padding-left: 3px;
  background: linear-gradient(#fdfdfd, #f0f0f0);
}
.sections button {
  box-sizing: border-box;
  justify-content: flex-start;
  gap: 3px;
  height: 23px;
  border: 1px solid transparent;
}
.sections .active {
  margin-right: 3px;
  padding-left: 3px;
  border-color: #3f8fcb;
  background: #fafcfe;
}

/* MDI area */
.workspace {
  display: flex;
  flex: 1;
  min-height: 0;
}
.mdi {
  position: relative;
  flex: 1;
  overflow: hidden;
  border-left: 2px solid #8a8a8a;
  background: #fff;
}
.brand {
  position: absolute;
  left: 914px;
  top: 369px;
  font: italic 700 68px/60px "Liberation Sans", Arial, sans-serif;
  color: #000;
}

.child {
  position: absolute;
  box-sizing: border-box;
  display: flex;
  flex-direction: column;
  padding: 0 5px 5px;
  border: 1px solid #5d646e;
  border-radius: 6px 6px 0 0;
  background: linear-gradient(#bccbdb, #d6e2ee 26px);
}
.child.front { z-index: 2; }
.child.active {
  border-color: #20303f;
  background: linear-gradient(#94b4d6, #b8d2ea 26px);
}
.child-title {
  display: flex;
  align-items: center;
  gap: 4px;
  flex: none;
  height: 24px;
  padding: 4px 2px 0 2px;
  box-sizing: border-box;
  color: #8b929b;
  white-space: nowrap;
}
.active .child-title { color: #1c1c1c; }
.win-icon { width: 14px; height: 12px; }
.child-buttons { display: flex; gap: 3px; margin-left: auto; }
.child-buttons button {
  box-sizing: border-box;
  width: 26px;
  height: 15px;
  border: 1px solid #8e9db4;
  border-radius: 2px;
  background: linear-gradient(#cddae8, #c2d1e2);
}
.child-buttons svg { width: 12px; height: 10px; }
.x-out { stroke: #5c6068; stroke-width: 3.600; }
.x-in { stroke: #fff; stroke-width: 1.400; }
.active .close {
  border-color: #6e2a26;
  background: linear-gradient(#e59a8d, #c4402e 50%, #cf5b42);
}
.active .x-in { stroke-width: 2.400; }

.child-body {
  display: flex;
  flex-direction: column;
  flex: 1;
  min-height: 0;
  overflow: hidden;
  background: #f0f0f0;
}
.tools {
  display: flex;
  align-items: center;
  flex: none;
  height: 26px;
  background: linear-gradient(#fefefe, #f3f3f3);
}
.tools button {
  box-sizing: border-box;
  flex: none;
  width: 23px;
  height: 23px;
}
.tools .group {
  flex: none;
  margin-right: 3px;
  padding-right: 2px;
  border-right: 1px solid #cfcfcf;
}
.tools .on {
  border: 1px solid #5a9fd0;
  background: #e6f1fa;
}
.amount {
  flex: none;
  width: 50px;
  height: 19px;
  border: 1px solid #7a7a7a;
  background: #fff;
}
.unit { color: #2a8a2a; }
.tools .unit { margin-left: 4px; font-size: 11px; }
.tools .decimals {
  flex-direction: column;
  font: 700 10px/10px "DejaVu Sans", sans-serif;
  color: #5d95bf;
}
.tools .more { margin-left: 22px; }
.tools .less { color: #bcbcbc; }
.views { display: flex; margin-left: 19px; }

.plot { display: flex; flex: 1; min-height: 0; }
.y-axis {
  display: flex;
  align-items: center;
  justify-content: center;
  flex: none;
  width: 22px;
  font: 14px/18px "DejaVu Sans", Verdana, sans-serif;
}
.y-axis span {
  writing-mode: vertical-rl;
  transform: rotate(180deg);
  text-decoration: underline;
  white-space: nowrap;
}
.plot-main { display: flex; flex-direction: column; flex: 1; min-width: 0; }
.x-axis {
  flex: none;
  height: 22px;
  padding-right: 5px;
  font: 14px/21px "DejaVu Sans", Verdana, sans-serif;
  text-align: center;
}
.x-axis.linked { text-decoration: underline; }
.grid-area { flex: 1; min-height: 0; overflow: hidden; }
.grid-area.fill { background: #ababab; }

table {
  table-layout: fixed;
  border-collapse: separate;
  border-spacing: 0;
  box-sizing: border-box;
  border-top: 1px solid #9a9a9a;
  border-left: 1px solid #9a9a9a;
  border-bottom: 1px solid #8a8a8a;
  font: 10px/12px Roboto, Arial, sans-serif;
  color: #1e1e1e;
}
th, td {
  padding: 0 4px 0 0;
  border-right: 1px solid #ffffff99;
  border-bottom: 1px solid #ffffff99;
  font-weight: 400;
  text-align: right;
  white-space: nowrap;
}
th {
  border-color: #a8a8a8;
  background: #f1f1f1;
}
tbody th { padding: 0 0 0 3px; text-align: left; }
tbody th.num { padding-right: 4px; text-align: right; }
tr:last-child td { border-bottom: 0; }
.selected { color: #fff; }
.active .selected { color: #1e1e1e; outline: 1px dotted #222; outline-offset: -1px; }

/* Torque converter form */
.torque {
  left: 814px;
  top: 464px;
  z-index: 1;
  width: 800px;
  height: 320px;
  padding: 0 6px;
  border-radius: 0;
}
.torque .child-title { height: 26px; padding-right: 15px; }
.form-body { background: #fff; }
.tabs {
  display: grid;
  grid-template-columns: repeat(8, 99px);
  flex: none;
  height: 18px;
  padding-left: 2px;
  background: #fafafa;
}
.tabs button {
  background: #f2f2f2;
  border-right: 1px solid #e2e2e2;
}
.tabs .current { background: #fbfbfb; }
.tabs.sub {
  grid-template-columns: 399px 1fr;
  margin-top: 2px;
}
.form {
  display: grid;
  grid-template-columns: repeat(4, 195px);
  padding-left: 9px;
}
.form-col {
  display: flex;
  flex-direction: column;
  gap: 2px;
}
h3 {
  height: 19px;
  margin: 0 0 0 2px;
  font: 700 10px/20px "DejaVu Sans", sans-serif;
  text-decoration: underline;
}
.space { height: 3px; }
.space-l { height: 5px; }
.pill {
  box-sizing: border-box;
  height: 17px;
  border: 1px solid #8488c8;
  border-radius: 3px;
  background: linear-gradient(#c3c5f6, #fff 40%, #f3f3ff 60%, #c3c5f6);
  line-height: 15px;
  white-space: nowrap;
}
.field { display: flex; height: 17px; }
.field .pill {
  flex: none;
  width: 101px;
  padding-left: 5px;
  border-radius: 3px 0 0 3px;
}
.field input {
  flex: none;
  width: 46px;
  height: 17px;
  padding: 0 1px 2px 0;
  border: 1px solid #777;
  background: #fff;
  text-align: right;
}
.field .unit { margin-left: 2px; line-height: 19px; white-space: nowrap; }
.select { position: relative; width: 72px; }
.select select {
  width: 100%;
  height: 17px;
  padding: 0 2px;
  border: 1px solid #d0d0d0;
  border-radius: 0;
  background: #fff;
  appearance: none;
}
.select svg {
  position: absolute;
  right: 2px;
  top: 6px;
  width: 10px;
  height: 6px;
}
.row { display: flex; gap: 3px; }
.half .pill { flex: none; width: 84px; }
.third .pill { flex: none; width: 56px; }

/* Scrollbars */
.vscroll {
  display: flex;
  justify-content: center;
  width: 16px;
  background: #f3f3f3;
}
.vscroll .thumb {
  width: 2px;
  height: 480px;
  margin-top: 14px;
  background: #858585;
}
.hscroll {
  display: flex;
  align-items: center;
  flex: none;
  height: 17px;
  padding: 0 80px 0 47px;
  background: #f1f1f1;
}
.hscroll .thumb {
  flex: 1;
  height: 2px;
  background: #8a8a8a;
}

/* Taskbar */
.taskbar {
  display: grid;
  grid-template-columns: 1fr auto 1fr;
  align-items: center;
  flex: none;
  height: 39px;
  border-top: 1px solid #a4a4a4;
  background: #dfdedc;
}
.dock {
  grid-column: 2;
  display: flex;
  align-items: center;
  gap: 4px;
  padding-left: 6px;
}
.start { margin-right: 6px; }
.start svg { width: 20px; height: 20px; }
.search {
  display: flex;
  align-items: center;
  gap: 8px;
  box-sizing: border-box;
  width: 182px;
  height: 25px;
  padding: 0 4px 0 9px;
  border: 1px solid #e8e8e8;
  border-radius: 13px;
  background: #f8f8f8;
}
.lens { width: 13px; height: 13px; }
.search input {
  flex: 1;
  min-width: 0;
  padding: 0;
  border: 0;
  background: none;
  font-size: 12px;
}
.search input::placeholder { color: #555; }
.mask { width: 38px; height: 22px; }
.pin {
  position: relative;
  width: 33px;
  height: 33px;
  border-radius: 3px;
}
.pin.current { background: #f2f2f1; }
.pin.alert { background: #f7e0e0; }
.mark {
  position: absolute;
  bottom: 1px;
  height: 2px;
  border-radius: 1px;
}
.dot { width: 5px; background: #858585; }
.bar { width: 13px; background: #1769b5; }
.red { width: 5px; background: #b8322a; }

.tray {
  grid-column: 3;
  display: flex;
  align-items: center;
  justify-content: flex-end;
  gap: 13px;
  padding-right: 17px;
}
.status { display: flex; gap: 6px; }
.clock {
  display: flex;
  flex-direction: column;
  align-items: flex-end;
  margin-right: -6px;
  line-height: 14px;
}
</style>
